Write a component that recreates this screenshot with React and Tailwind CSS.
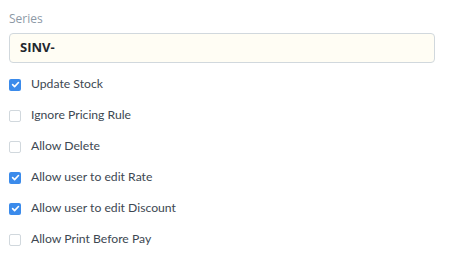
const options = [
  { label: "Update Stock", checked: true },
  { label: "Ignore Pricing Rule", checked: false },
  { label: "Allow Delete", checked: false },
  { label: "Allow user to edit Rate", checked: true },
  { label: "Allow user to edit Discount", checked: true },
  { label: "Allow Print Before Pay", checked: false },
]

function Check({ checked }) {
  if (checked) {
    return (
      <span className="flex h-[12px] w-[12px] items-center justify-center rounded-[2px] bg-[#3b8beb]">
        <svg width="9" height="9" viewBox="0 0 10 10" fill="none">
          <path d="M1.8 5.2 L4 7.3 L8.3 2.8" stroke="white" strokeWidth="1.8" strokeLinecap="round" strokeLinejoin="round" />
        </svg>
      </span>
    )
  }
  return <span className="h-[12px] w-[12px] rounded-[2px] border border-[#d1d8dd] bg-white" />
}

export default function App() {
  return (
    <div className="h-[279px] w-[453px] bg-white px-[9px] pt-[11px] font-['Open_Sans','Noto_Sans',sans-serif]">
      <div className="text-[12px] leading-[16px] text-[#8d99a6]">Series</div>
      <div className="mt-[6px] flex h-[30px] w-[426px] items-center rounded-[4px] border border-[#d1d8dd] bg-[#fffdf4] px-[10px] text-[13px] font-bold text-[#1f272e]">
        SINV-
      </div>
      <div className="mt-[6px] flex flex-col">
        {options.map(({ label, checked }) => (
          <div key={label} className="flex h-[31px] items-center gap-[10px]">
            <Check checked={checked} />
            <span className="font-['Lato',sans-serif] text-[12.2px] text-[#3d4852]">{label}</span>
          </div>
        ))}
      </div>
    </div>
  )
}
